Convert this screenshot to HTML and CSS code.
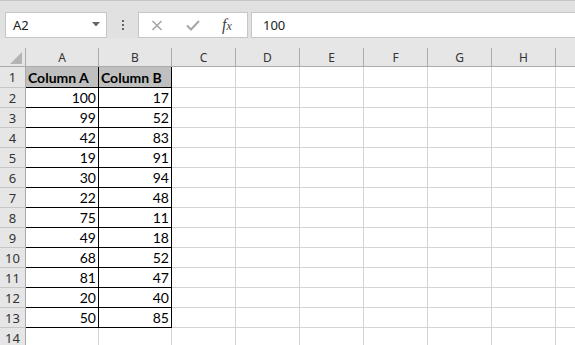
FILE: index.html
```html
<!DOCTYPE html>
<html lang="en">
<head>
  <meta charset="UTF-8" />
  <title>Book1 - Excel</title>
  <link rel="stylesheet" href="styles.css">
</head>
<body>
  <!-- Formula bar -->
  <div class="formula-bar">
    <div class="name-box">
      <span>A2</span>
      <svg class="drop" width="8" height="5" viewBox="0 0 8 5"><path d="M0 0h8L4 4.5z" fill="#666"/></svg>
    </div>
    <div class="grip"><i></i><i></i><i></i></div>
    <div class="fx-box">
      <svg width="12" height="11" viewBox="0 0 12 11"><path d="M1.5 1l9 9M10.5 1l-9 9" stroke="#a6a6a6" stroke-width="1.6" fill="none"/></svg>
      <svg width="14" height="11" viewBox="0 0 14 11"><path d="M1 5.5l4 4L13 1" stroke="#a6a6a6" stroke-width="2" fill="none"/></svg>
      <span class="fx"><i>f</i><em>x</em></span>
    </div>
    <div class="formula-input">100</div>
  </div>

  <!-- Sheet -->
  <div class="gap"></div>
  <div class="grid" id="grid"></div>

  <script>
    const data = [
      ["Column A", "Column B"],
      [100, 17], [99, 52], [42, 83], [19, 91], [30, 94], [22, 48],
      [75, 11], [49, 18], [68, 52], [81, 47], [20, 40], [50, 85]
    ];
    // last column is only partly in view, its letter falls outside
    const letters = ["A", "B", "C", "D", "E", "F", "G", "H", ""];
    const grid = document.getElementById("grid");
    let html = '<div class="corner"><span class="tri"></span></div>';
    letters.forEach(l => { html += `<div class="col-head">${l}</div>`; });

    for (let r = 0; r < 14; r++) {
      html += `<div class="row-head">${r + 1}</div>`;
      letters.forEach((l, c) => {
        let cls = "cell";
        let text = "";
        if (c < 2 && r < data.length) {
          cls += " boxed";
          text = data[r][c];
          if (r === 0) cls += " title";
        }
        html += `<div class="${cls}">${text}</div>`;
      });
    }
    grid.innerHTML = html;
  </script>
</body>
</html>
```

FILE: styles.css
```css
body {
  margin: 0;
  background: #fff;
  overflow: hidden;
  font-family: "Noto Sans", sans-serif;
}

/* formula bar */
.formula-bar {
  display: flex;
  align-items: flex-start;
  box-sizing: border-box;
  height: 38px;
  padding: 11px 0 0 5px;
  background: #e1e1e1;
  border-top: 1px solid #c6c6c6;
}

.name-box {
  box-sizing: border-box;
  width: 102px;
  height: 26px;
  display: flex;
  align-items: center;
  justify-content: space-between;
  padding: 0 6px 0 7px;
  background: #fff;
  border: 1px solid #c6c6c6;
  font-size: 13px;
  color: #222;
}

.drop {
  margin-top: -2px;
}

.grip {
  width: 31px;
  height: 26px;
  display: flex;
  flex-direction: column;
  align-items: center;
  justify-content: center;
  gap: 2px;
}

.grip i {
  width: 2px;
  height: 2px;
  background: #666;
}

.fx-box {
  box-sizing: border-box;
  width: 110px;
  height: 26px;
  display: flex;
  align-items: center;
  padding: 0 0 0 12px;
  background: #fff;
  border: 1px solid #c6c6c6;
}

.fx-box svg:nth-child(2) {
  margin-left: 23px;
}

.fx {
  margin-left: 22px;
  font-family: "Liberation Serif", serif;
  font-size: 16px;
  line-height: 1;
  color: #444;
}

.fx i {
  font-style: italic;
}

.fx em {
  font-style: italic;
  font-size: 12px;
}

.formula-input {
  box-sizing: border-box;
  flex: 1;
  height: 26px;
  margin-left: 3px;
  padding-left: 11px;
  display: flex;
  align-items: center;
  background: #fff;
  border: 1px solid #c6c6c6;
  border-right: none;
  font-size: 13px;
  color: #222;
}

/* sheet */
.gap {
  height: 10px;
  background: #e6e6e6;
}

.grid {
  display: grid;
  grid-template-columns: 26px 73px 73px repeat(6, 64px) 20px;
  grid-template-rows: 19px 21px repeat(13, 20px);
}

.grid > div {
  box-sizing: border-box;
  border-right: 1px solid #d4d4d4;
  border-bottom: 1px solid #d4d4d4;
}

.corner {
  position: relative;
  background: #e6e6e6;
  border-right-color: #ababab !important;
  border-bottom-color: #ababab !important;
}

.tri {
  position: absolute;
  right: 3px;
  bottom: 2px;
  width: 0;
  height: 0;
  border-left: 12px solid transparent;
  border-bottom: 12px solid #b4b4b4;
}

.col-head {
  display: flex;
  align-items: center;
  justify-content: center;
  background: #e6e6e6;
  border-right-color: #ababab !important;
  border-bottom-color: #ababab !important;
  font-size: 12px;
  color: #333;
}

.row-head {
  display: flex;
  align-items: center;
  justify-content: center;
  background: #e6e6e6;
  border-right-color: #ababab !important;
  border-bottom-color: #c6c6c6 !important;
  font-size: 13px;
  color: #333;
}

.cell {
  display: flex;
  align-items: flex-end;
  justify-content: flex-end;
  padding: 0 2px 1px 0;
  font-family: Lato, sans-serif;
  font-size: 14px;
  color: #000;
}

.cell.boxed {
  border-right-color: #000;
  border-bottom-color: #000;
}

.cell.title {
  justify-content: flex-start;
  padding-left: 2px;
  background: #bfbfbf;
  font-weight: bold;
}
```
